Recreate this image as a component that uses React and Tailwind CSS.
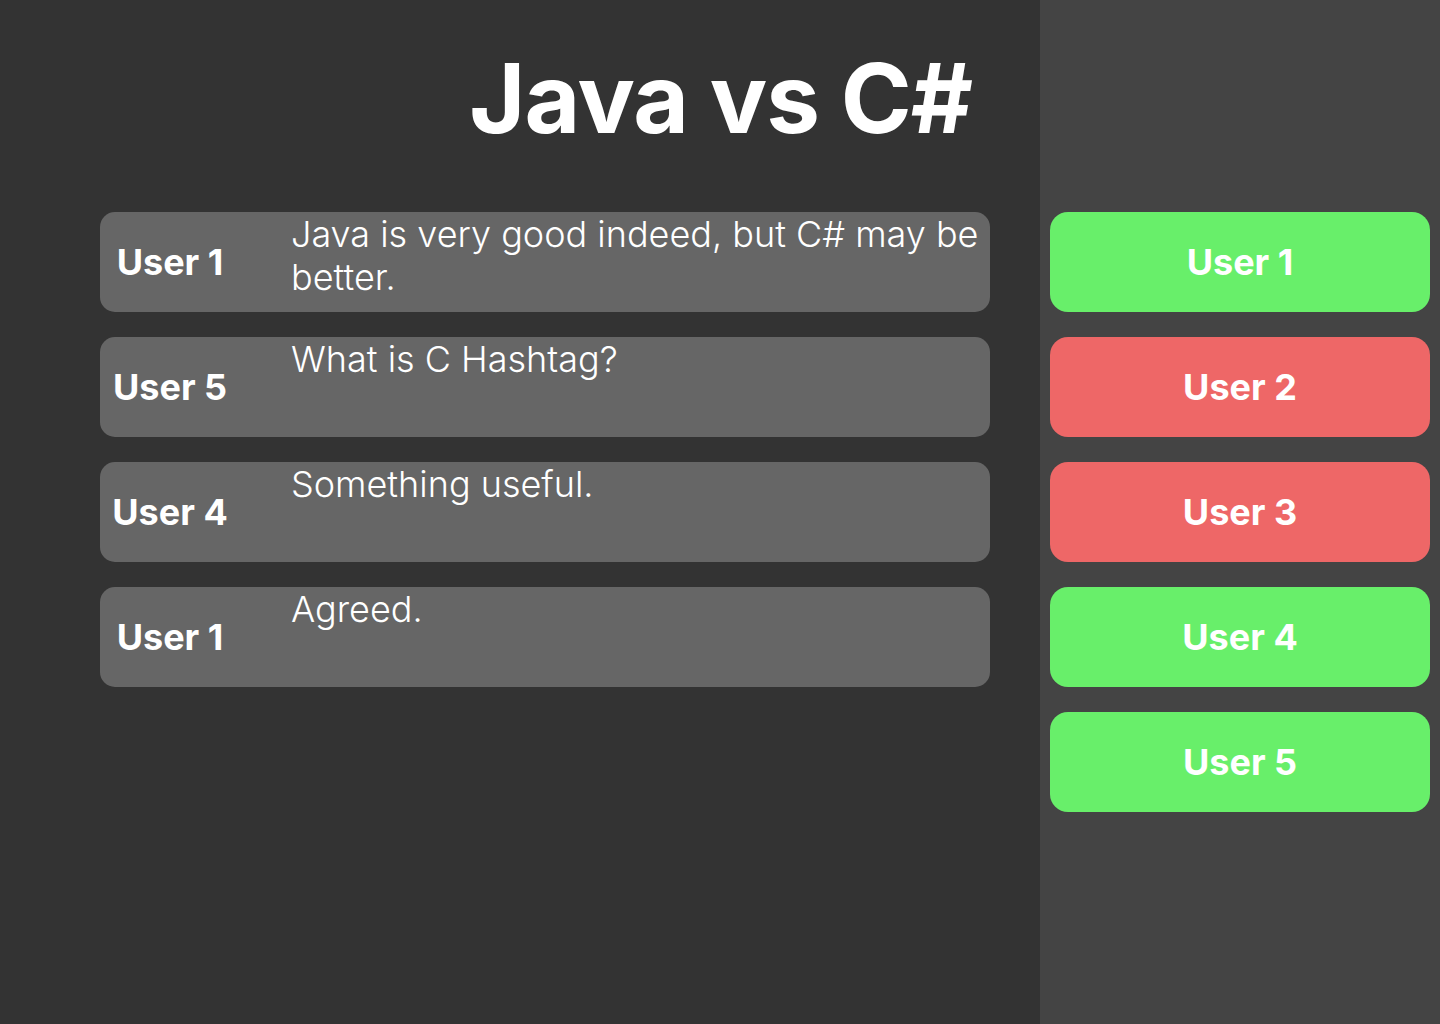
const messages = [
  { user: "User 1", text: "Java is very good indeed, but C# may be better." },
  { user: "User 5", text: "What is C Hashtag?" },
  { user: "User 4", text: "Something useful." },
  { user: "User 1", text: "Agreed." },
];

const users = [
  { name: "User 1", online: true },
  { name: "User 2", online: false },
  { name: "User 3", online: false },
  { name: "User 4", online: true },
  { name: "User 5", online: true },
];

export default function App() {
  return (
    <div
      className="flex w-[1440px] h-[1024px] text-white"
      style={{ fontFamily: "Inter, 'Noto Sans', sans-serif" }}
    >
      <div className="w-[1040px] h-full bg-[#333333] pl-[100px] pr-[50px]">
        <h1 className="h-[212px] pt-[40px] text-right pr-[18px] text-[96px] font-bold leading-[116px] tracking-[-1px]">
          Java vs C#
        </h1>
        <div className="flex flex-col gap-[25px]">
          {messages.map((m, i) => (
            <div key={i} className="flex h-[100px] rounded-[15px] bg-[#666666]">
              <div className="w-[140px] shrink-0 flex items-center justify-center text-[36px] font-bold">
                {m.user}
              </div>
              <div className="flex-1 pl-[51px] pr-[4px] pt-[1px] text-[36px] font-light leading-[43px]">
                {m.text}
              </div>
            </div>
          ))}
        </div>
      </div>
      <div className="flex-1 h-full bg-[#444444] pt-[212px] px-[10px] flex flex-col gap-[25px]">
        {users.map((u) => (
          <div
            key={u.name}
            className={
              "h-[100px] rounded-[18px] flex items-center justify-center text-[36px] font-bold " +
              (u.online ? "bg-[#68ef6a]" : "bg-[#ee6767]")
            }
          >
            {u.name}
          </div>
        ))}
      </div>
    </div>
  );
}
